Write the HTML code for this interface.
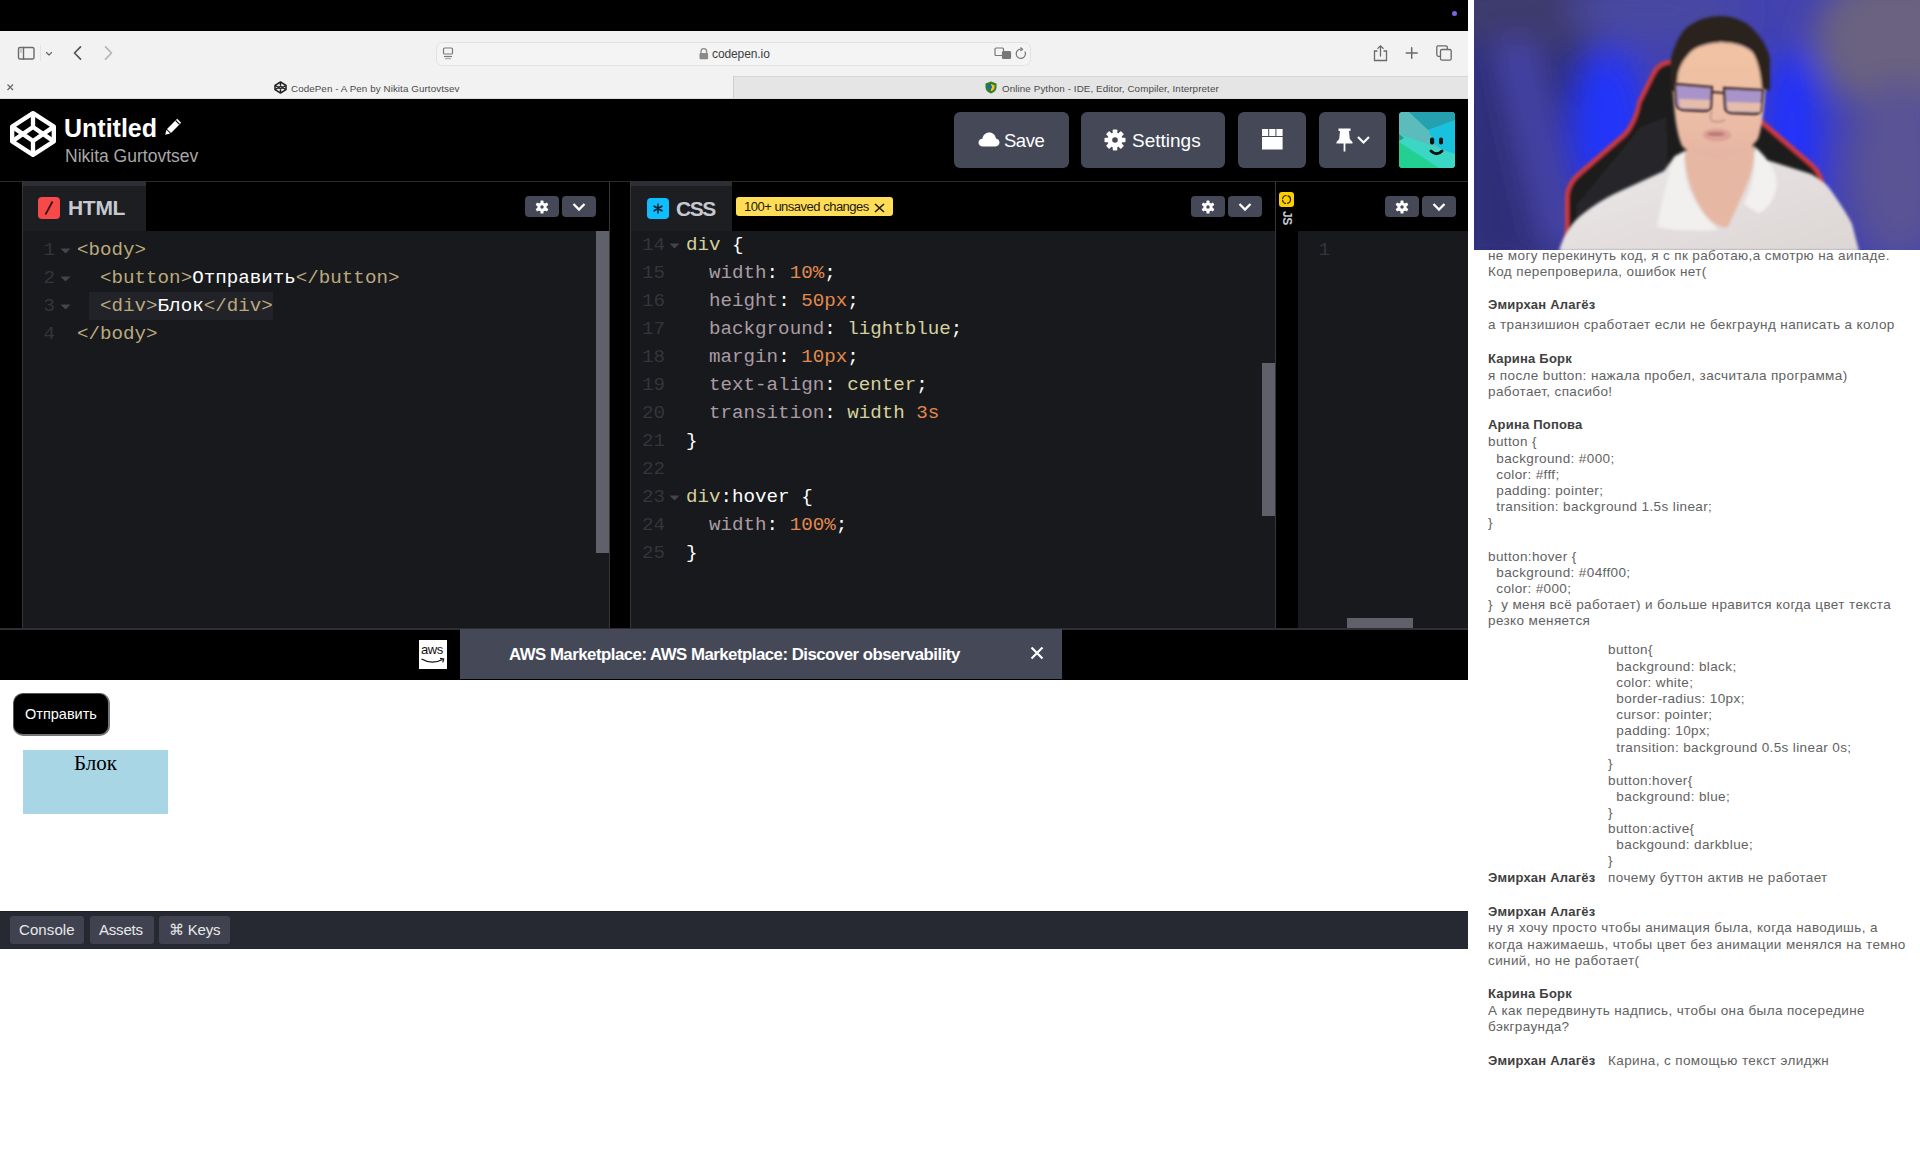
<!DOCTYPE html>
<html><head><meta charset="utf-8">
<style>
html,body{margin:0;padding:0}
body{width:1920px;height:1149px;overflow:hidden;position:relative;background:#fff;font-family:"Liberation Sans",sans-serif}
.a{position:absolute}
.mono{font-family:"Liberation Mono",monospace}
/* top */
#top{left:0;top:0;width:1468px;height:31px;background:#000}
#chrome{left:0;top:31px;width:1468px;height:68px;background:#f2f2f2}
#hdr{left:0;top:99px;width:1468px;height:82px;background:#000}
#edwrap{left:0;top:181px;width:1468px;height:449px;background:#000}
.ed{background:#17191d}
.tbtn{background:#444857;border-radius:4px}
#ad{left:0;top:630px;width:1468px;height:50px;background:#000}
#prev{left:0;top:680px;width:1468px;height:231px;background:#fff}
#cons{left:0;top:911px;width:1468px;height:38px;background:#262932}
#cam{left:1474px;top:0;width:446px;height:250px;background:#3b3f9a;overflow:hidden}
.cm{font-size:13.5px;line-height:16px;letter-spacing:0.38px;color:#626262;white-space:pre}
.cn{font-size:13px;line-height:16px;letter-spacing:0.2px;color:#404040;font-weight:bold;white-space:pre}
</style></head><body>
<div id="top" class="a"><div class="a" style="left:1452px;top:11px;width:5px;height:5px;border-radius:50%;background:#7a63e8"></div></div>
<div id="chrome" class="a">
<svg class="a" style="left:0;top:0" width="1468" height="68" viewBox="0 31 1468 68">
 <g fill="none" stroke="#6b6b6b" stroke-width="1.4" stroke-linecap="round" stroke-linejoin="round">
  <rect x="18.5" y="47.5" width="15.5" height="11.5" rx="1.6"/>
  <line x1="23.5" y1="47.5" x2="23.5" y2="59"/>
  <path d="M46.5 52.5 L49 55 L51.5 52.5" stroke-width="1.2"/>
  <path d="M80.5 46.8 L74.5 53 L80.5 59.2" stroke="#555" stroke-width="1.7"/>
  <path d="M105.5 46.8 L111.5 53 L105.5 59.2" stroke="#b5b5b5" stroke-width="1.7"/>
 </g>
 <rect x="20" y="49.5" width="2" height="0.8" fill="#888"/><rect x="20" y="51.5" width="2" height="0.8" fill="#888"/>
 <line x1="40.5" y1="45" x2="40.5" y2="61" stroke="#e4e4e4" stroke-width="1"/>
 <rect x="436.5" y="42.5" width="594" height="23" rx="6" fill="#f4f4f4" stroke="#e2e2e2" stroke-width="1"/>
 <g fill="none" stroke="#7a7a7a" stroke-width="1.2">
  <rect x="443.5" y="48" width="9" height="6" rx="1"/>
  <line x1="444" y1="56.5" x2="452" y2="56.5"/><line x1="445" y1="58.6" x2="451" y2="58.6" stroke="#aaa"/>
 </g>
 <path d="M701 53 v-1.5 a2.8 2.8 0 0 1 5.6 0 v1.5" fill="none" stroke="#8a8a8a" stroke-width="1.3"/>
 <rect x="699.5" y="53" width="8.6" height="6.2" rx="1" fill="#8a8a8a"/>
 <g fill="none" stroke="#777" stroke-width="1.2">
  <rect x="995" y="48" width="8.5" height="7.5" rx="1"/>
  <rect x="1002.5" y="51.5" width="8" height="7" rx="1" fill="#777"/>
  <path d="M1024.8 51.5 A4.6 4.6 0 1 1 1021 49.2"/>
  <path d="M1020.5 47.5 L1022.5 49.2 L1020.5 51"/>
 </g>
 <g fill="none" stroke="#6a6a6a" stroke-width="1.3" stroke-linecap="round">
  <path d="M1377 51 h-2.5 v9.5 h12 v-9.5 h-2.5"/>
  <path d="M1380.5 56 V45.8 M1377.8 48.4 L1380.5 45.8 L1383.2 48.4"/>
  <path d="M1411.7 47.7 V58.3 M1406.2 53 H1417.2" stroke-width="1.5"/>
  <rect x="1436.8" y="45.8" width="10.5" height="10.5" rx="1.5"/>
  <rect x="1440.5" y="49.5" width="10.7" height="10.7" rx="1.5" fill="#f2f2f2"/>
 </g>
 <rect x="733.5" y="76" width="734.5" height="23" fill="#e5e5e5"/>
 <line x1="733.5" y1="76.5" x2="1468" y2="76.5" stroke="#d6d6d6"/>
 <line x1="733.5" y1="76" x2="733.5" y2="99" stroke="#cfcfcf"/>
 <line x1="0" y1="98.5" x2="1468" y2="98.5" stroke="#dcdcdc"/>
 <g stroke="#666" stroke-width="1.2"><path d="M7.5 84.5 L13 90 M13 84.5 L7.5 90"/></g>
</svg>
<div class="a" style="left:712px;top:16px;font-size:12px;color:#3d3d3d;letter-spacing:-0.1px">codepen.io</div>
<svg class="a" style="left:274px;top:50px" width="13" height="13" viewBox="0 0 13 13"><g fill="none" stroke="#222" stroke-width="1.5" stroke-linejoin="round"><path d="M6.5 1 L12 4.3 V8.7 L6.5 12 L1 8.7 V4.3 Z"/><path d="M1 4.3 L6.5 7.7 L12 4.3 M6.5 1 V4.6 M1 8.7 L6.5 5.3 L12 8.7 M6.5 12 V8.4"/></g></svg>
<div class="a" style="left:291px;top:51.5px;font-size:9.8px;color:#4a4a4a;letter-spacing:0.08px">CodePen - A Pen by Nikita Gurtovtsev</div>
<svg class="a" style="left:985px;top:50px" width="12" height="13" viewBox="0 0 12 13"><path d="M6 0.5 L11.5 2.5 V6.5 C11.5 9.5 9 11.5 6 12.5 C3 11.5 0.5 9.5 0.5 6.5 V2.5 Z" fill="#2e7d32"/><path d="M6 3 L9.5 4.2 V6.5 C9.5 8.3 8 9.6 6 10.3 Z" fill="#f9c21a"/><circle cx="5" cy="6" r="2" fill="#1565c0"/></svg>
<div class="a" style="left:1002px;top:51.5px;font-size:9.8px;color:#4a4a4a;letter-spacing:0.1px">Online Python - IDE, Editor, Compiler, Interpreter</div>
</div>
<div id="hdr" class="a">
<svg class="a" style="left:10px;top:12px" width="46" height="46" viewBox="-3 -3 106 106"><g fill="none" stroke="#fff" stroke-width="10" stroke-linejoin="round"><path d="M50 2 L98 33 V67 L50 98 L2 67 V33 Z"/><path d="M2 33 L50 66 L98 33 M2 67 L50 34 L98 67 M50 2 V34 M50 98 V66"/></g></svg>
<div class="a" style="left:64px;top:14.5px;font-size:25px;font-weight:bold;color:#fff;letter-spacing:0px">Untitled</div>
<svg class="a" style="left:164px;top:18px" width="19" height="19" viewBox="0 0 19 19"><path d="M13.2 1.8 L17.2 5.8 L7 16 L3 12 Z" fill="#fff"/><path d="M2.4 12.8 L6.2 16.6 L1.2 17.8 Z" fill="#fff"/><path d="M11.6 3.4 L15.6 7.4" stroke="#000" stroke-width="1.2"/></svg>
<div class="a" style="left:65px;top:47px;font-size:17.5px;color:#a8a8a8">Nikita Gurtovtsev</div>
<div class="a tbtn" style="left:954px;top:13px;width:115px;height:56px;border-radius:6px"></div>
<svg class="a" style="left:978px;top:33px" width="22" height="15" viewBox="0 0 22 15"><path d="M5 14.5 C2 14.5 0.5 12.5 0.5 10.5 C0.5 8.3 2.3 6.7 4.4 6.7 C4.9 3 7.9 0.5 11.3 0.5 C14.8 0.5 17.5 3 17.9 6.5 C20 6.8 21.5 8.5 21.5 10.6 C21.5 12.8 19.8 14.5 17.5 14.5 Z" fill="#fff"/></svg>
<div class="a" style="left:1004px;top:31px;font-size:18.5px;letter-spacing:-0.5px;color:#fff">Save</div>
<div class="a tbtn" style="left:1081px;top:13px;width:144px;height:56px;border-radius:6px"></div>
<svg class="a" style="left:1104px;top:30px" width="22" height="22" viewBox="-11 -11 22 22"><g fill="#fff"><circle r="7.6"/><g id="tooth"><rect x="-2.3" y="-10.5" width="4.6" height="5" rx="0.8"/></g><use href="#tooth" transform="rotate(45)"/><use href="#tooth" transform="rotate(90)"/><use href="#tooth" transform="rotate(135)"/><use href="#tooth" transform="rotate(180)"/><use href="#tooth" transform="rotate(225)"/><use href="#tooth" transform="rotate(270)"/><use href="#tooth" transform="rotate(315)"/></g><circle r="2.8" fill="#444857"/></svg>
<div class="a" style="left:1132px;top:30.5px;font-size:19px;color:#fff">Settings</div>
<div class="a tbtn" style="left:1238px;top:13px;width:68px;height:56px;border-radius:6px"></div>
<svg class="a" style="left:1262px;top:30px" width="21" height="21" viewBox="0 0 21 21"><g fill="#fff"><rect x="0" y="0" width="6.2" height="7"/><rect x="7.2" y="0" width="6.2" height="7"/><rect x="14.4" y="0" width="6.2" height="7"/><rect x="0" y="8" width="20.6" height="12.5"/></g></svg>
<div class="a tbtn" style="left:1319px;top:13px;width:67px;height:56px;border-radius:6px"></div>
<svg class="a" style="left:1336px;top:29px" width="36" height="24" viewBox="0 0 36 24"><g fill="#fff"><path d="M2.5 0.5 H14.5 V3 H13 L13.8 11 L16.5 14 V15.5 H0.5 V14 L3.2 11 L4 3 H2.5 Z"/><rect x="7.6" y="15" width="1.8" height="8.5"/></g><path d="M22 9 L27.5 14.5 L33 9" fill="none" stroke="#fff" stroke-width="2.2"/></svg>
<div class="a" style="left:1399px;top:13px;width:56px;height:56px;border-radius:4px;overflow:hidden;background:#2cc0c8">
 <svg class="a" style="left:0;top:0" width="56" height="56" viewBox="0 0 56 56">
  <rect width="56" height="56" fill="#3ccdd0"/>
  <path d="M0 0 H56 V56 H0 Z" fill="#5cbcbc"/>
  <path d="M29 18 L56 8 V48 L36 32 Z" fill="#18c2de"/>
  <path d="M10 0 H56 V8 L29 18 Z" fill="#24a0b0"/>
  <path d="M0 22 L56 42 V56 H40 L0 34 Z" fill="#3cd6c4"/>
  <path d="M0 30 L40 56 H0 Z" fill="#22d092"/>
  <path d="M0 22 L5 26 L0 29 Z" fill="#2a9a88"/>
  <rect x="31" y="25.5" width="4.2" height="7" rx="2" fill="#081010"/>
  <rect x="40" y="25.5" width="4" height="7" rx="2" fill="#081010"/>
  <path d="M32 39 Q37.5 44.5 43 39" fill="none" stroke="#081010" stroke-width="3" stroke-linecap="round"/>
 </svg>
</div>
</div>
<div id="edwrap" class="a">
<div class="a" style="left:0;top:0;width:1468px;height:1px;background:#2b2b2e"></div>
<div class="a" style="left:22px;top:0;width:1px;height:447px;background:#35363a"></div>
<div class="a" style="left:23px;top:0;width:123px;height:50px;background:#1c1e22;border-top:5px solid #2d2f34;box-sizing:border-box"></div>
<div class="a" style="left:38px;top:16px;width:22px;height:22px;border-radius:4px;background:#f5494a"></div><svg class="a" style="left:38px;top:16px" width="22" height="22"><path d="M14.5 4.5 L7.5 17.5" stroke="#2a0e0e" stroke-width="1.6"/></svg>
<div class="a" style="left:68px;top:15px;font-size:21px;font-weight:bold;color:#c7c9d1;letter-spacing:-0.3px">HTML</div>
<div class="a tbtn" style="left:525px;top:15px;width:34px;height:21px;border-radius:4px"></div><svg class="a" style="left:535px;top:18.5px" width="14" height="14" viewBox="-7 -7 14 14"><g fill="#fff"><circle r="4.6"/><rect x="-1.5" y="-6.6" width="3" height="3.4" rx=".6"/><rect x="-1.5" y="-6.6" width="3" height="3.4" rx=".6" transform="rotate(60)"/><rect x="-1.5" y="-6.6" width="3" height="3.4" rx=".6" transform="rotate(120)"/><rect x="-1.5" y="-6.6" width="3" height="3.4" rx=".6" transform="rotate(180)"/><rect x="-1.5" y="-6.6" width="3" height="3.4" rx=".6" transform="rotate(240)"/><rect x="-1.5" y="-6.6" width="3" height="3.4" rx=".6" transform="rotate(300)"/></g><circle r="1.7" fill="#444857"/></svg>
<div class="a tbtn" style="left:562px;top:15px;width:34px;height:21px;border-radius:4px"></div><svg class="a" style="left:572px;top:21px" width="14" height="10" viewBox="0 0 14 10"><path d="M1.5 2 L7 7.5 L12.5 2" fill="none" stroke="#fff" stroke-width="2.3"/></svg>
<div class="a ed" style="left:23px;top:50px;width:586px;height:397px"></div>
<div class="a" style="left:596px;top:50px;width:13px;height:322px;background:#5f606a"></div>
<div class="a" style="left:609px;top:0;width:1px;height:447px;background:#35363a"></div>
<div class="a" style="left:630px;top:0;width:1px;height:447px;background:#35363a"></div>
<div class="a" style="left:631px;top:0;width:101px;height:50px;background:#1c1e22;border-top:5px solid #2d2f34;box-sizing:border-box"></div>
<div class="a" style="left:647px;top:17px;width:22px;height:21px;border-radius:4px;background:#0ebeff"></div><svg class="a" style="left:647px;top:17px" width="22" height="21" viewBox="0 0 22 21"><g stroke="#0b2533" stroke-width="1.6" stroke-linecap="round"><path d="M11 6 V15 M7.1 8.2 L14.9 12.8 M14.9 8.2 L7.1 12.8"/></g></svg>
<div class="a" style="left:676px;top:15.5px;font-size:21px;font-weight:bold;color:#c7c9d1;letter-spacing:-1.5px">CSS</div>
<div class="a" style="left:736px;top:16px;width:157px;height:19px;border-radius:3px;background:#ffdd57"></div><div class="a" style="left:744px;top:17.5px;font-size:13px;color:#1c1a10;letter-spacing:-0.5px">100+ unsaved changes</div><svg class="a" style="left:874px;top:21.5px" width="11" height="10"><path d="M1 1 L10 9 M10 1 L1 9" stroke="#1c1a10" stroke-width="1.6"/></svg>
<div class="a tbtn" style="left:1191px;top:15px;width:34px;height:21px;border-radius:4px"></div><svg class="a" style="left:1201px;top:18.5px" width="14" height="14" viewBox="-7 -7 14 14"><g fill="#fff"><circle r="4.6"/><rect x="-1.5" y="-6.6" width="3" height="3.4" rx=".6"/><rect x="-1.5" y="-6.6" width="3" height="3.4" rx=".6" transform="rotate(60)"/><rect x="-1.5" y="-6.6" width="3" height="3.4" rx=".6" transform="rotate(120)"/><rect x="-1.5" y="-6.6" width="3" height="3.4" rx=".6" transform="rotate(180)"/><rect x="-1.5" y="-6.6" width="3" height="3.4" rx=".6" transform="rotate(240)"/><rect x="-1.5" y="-6.6" width="3" height="3.4" rx=".6" transform="rotate(300)"/></g><circle r="1.7" fill="#444857"/></svg>
<div class="a tbtn" style="left:1228px;top:15px;width:34px;height:21px;border-radius:4px"></div><svg class="a" style="left:1238px;top:21px" width="14" height="10" viewBox="0 0 14 10"><path d="M1.5 2 L7 7.5 L12.5 2" fill="none" stroke="#fff" stroke-width="2.3"/></svg>
<div class="a ed" style="left:631px;top:50px;width:644px;height:397px"></div>
<div class="a" style="left:1262px;top:182px;width:13px;height:153px;background:#5f606a"></div>
<div class="a" style="left:1275px;top:0;width:1px;height:447px;background:#35363a"></div>
<div class="a" style="left:1279px;top:11px;width:15px;height:15px;border-radius:3px;background:#fcd000"></div><svg class="a" style="left:1279px;top:11px" width="15" height="15"><circle cx="7.5" cy="7.5" r="4" fill="none" stroke="#2a2200" stroke-width="1.2" stroke-dasharray="5.5 1"/></svg>
<div class="a" style="left:1280px;top:30px;font-size:12px;font-weight:bold;color:#c7c9d1;writing-mode:vertical-rl;letter-spacing:-0.5px">JS</div>
<div class="a tbtn" style="left:1385px;top:15px;width:34px;height:21px;border-radius:4px"></div><svg class="a" style="left:1395px;top:18.5px" width="14" height="14" viewBox="-7 -7 14 14"><g fill="#fff"><circle r="4.6"/><rect x="-1.5" y="-6.6" width="3" height="3.4" rx=".6"/><rect x="-1.5" y="-6.6" width="3" height="3.4" rx=".6" transform="rotate(60)"/><rect x="-1.5" y="-6.6" width="3" height="3.4" rx=".6" transform="rotate(120)"/><rect x="-1.5" y="-6.6" width="3" height="3.4" rx=".6" transform="rotate(180)"/><rect x="-1.5" y="-6.6" width="3" height="3.4" rx=".6" transform="rotate(240)"/><rect x="-1.5" y="-6.6" width="3" height="3.4" rx=".6" transform="rotate(300)"/></g><circle r="1.7" fill="#444857"/></svg>
<div class="a tbtn" style="left:1422px;top:15px;width:34px;height:21px;border-radius:4px"></div><svg class="a" style="left:1432px;top:21px" width="14" height="10" viewBox="0 0 14 10"><path d="M1.5 2 L7 7.5 L12.5 2" fill="none" stroke="#fff" stroke-width="2.3"/></svg>
<div class="a ed" style="left:1298px;top:50px;width:170px;height:397px"></div>
<div class="a" style="left:1347px;top:437px;width:66px;height:10px;background:#5f606a"></div>
<div class="a" style="left:0;top:447px;width:1468px;height:2px;background:#2e2f33"></div>
<div class="a" style="left:89px;top:111px;width:184px;height:28px;background:#212328"></div>
<div class="a mono" style="left:20px;top:55px;width:35px;text-align:right;font-size:19.2px;line-height:28px;white-space:pre;color:#33353b">1</div>
<svg class="a" style="left:60px;top:67px" width="11" height="6"><path d="M0.5 0.5 H10.5 L5.5 5.5 Z" fill="#43454b"/></svg>
<div class="a mono" style="left:77px;top:55px;font-size:19.2px;line-height:28px;white-space:pre;color:#fff"><span style="color:#bba97c">&lt;body&gt;</span></div>
<div class="a mono" style="left:20px;top:83px;width:35px;text-align:right;font-size:19.2px;line-height:28px;white-space:pre;color:#33353b">2</div>
<svg class="a" style="left:60px;top:95px" width="11" height="6"><path d="M0.5 0.5 H10.5 L5.5 5.5 Z" fill="#43454b"/></svg>
<div class="a mono" style="left:77px;top:83px;font-size:19.2px;line-height:28px;white-space:pre;color:#fff">  <span style="color:#bba97c">&lt;button&gt;</span><span style="color:#ffffff">Отправить</span><span style="color:#bba97c">&lt;/button&gt;</span></div>
<div class="a mono" style="left:20px;top:111px;width:35px;text-align:right;font-size:19.2px;line-height:28px;white-space:pre;color:#33353b">3</div>
<svg class="a" style="left:60px;top:123px" width="11" height="6"><path d="M0.5 0.5 H10.5 L5.5 5.5 Z" fill="#43454b"/></svg>
<div class="a mono" style="left:77px;top:111px;font-size:19.2px;line-height:28px;white-space:pre;color:#fff">  <span style="color:#bba97c">&lt;div&gt;</span><span style="color:#ffffff">Блок</span><span style="color:#bba97c">&lt;/div&gt;</span></div>
<div class="a mono" style="left:20px;top:139px;width:35px;text-align:right;font-size:19.2px;line-height:28px;white-space:pre;color:#33353b">4</div>
<div class="a mono" style="left:77px;top:139px;font-size:19.2px;line-height:28px;white-space:pre;color:#fff"><span style="color:#bba97c">&lt;/body&gt;</span></div>
<div class="a mono" style="left:630px;top:50px;width:35px;text-align:right;font-size:19.2px;line-height:28px;white-space:pre;color:#33353b">14</div>
<svg class="a" style="left:669px;top:62px" width="11" height="6"><path d="M0.5 0.5 H10.5 L5.5 5.5 Z" fill="#43454b"/></svg>
<div class="a mono" style="left:686px;top:50px;font-size:19.2px;line-height:28px;white-space:pre;color:#fff"><span style="color:#d6d19c">div</span><span style="color:#ffffff"> {</span></div>
<div class="a mono" style="left:630px;top:78px;width:35px;text-align:right;font-size:19.2px;line-height:28px;white-space:pre;color:#33353b">15</div>
<div class="a mono" style="left:686px;top:78px;font-size:19.2px;line-height:28px;white-space:pre;color:#fff">  <span style="color:#aa9ca3">width</span><span style="color:#ffffff">: </span><span style="color:#e38a4e">10%</span><span style="color:#ffffff">;</span></div>
<div class="a mono" style="left:630px;top:106px;width:35px;text-align:right;font-size:19.2px;line-height:28px;white-space:pre;color:#33353b">16</div>
<div class="a mono" style="left:686px;top:106px;font-size:19.2px;line-height:28px;white-space:pre;color:#fff">  <span style="color:#aa9ca3">height</span><span style="color:#ffffff">: </span><span style="color:#e38a4e">50px</span><span style="color:#ffffff">;</span></div>
<div class="a mono" style="left:630px;top:134px;width:35px;text-align:right;font-size:19.2px;line-height:28px;white-space:pre;color:#33353b">17</div>
<div class="a mono" style="left:686px;top:134px;font-size:19.2px;line-height:28px;white-space:pre;color:#fff">  <span style="color:#aa9ca3">background</span><span style="color:#ffffff">: </span><span style="color:#d6d19c">lightblue</span><span style="color:#ffffff">;</span></div>
<div class="a mono" style="left:630px;top:162px;width:35px;text-align:right;font-size:19.2px;line-height:28px;white-space:pre;color:#33353b">18</div>
<div class="a mono" style="left:686px;top:162px;font-size:19.2px;line-height:28px;white-space:pre;color:#fff">  <span style="color:#aa9ca3">margin</span><span style="color:#ffffff">: </span><span style="color:#e38a4e">10px</span><span style="color:#ffffff">;</span></div>
<div class="a mono" style="left:630px;top:190px;width:35px;text-align:right;font-size:19.2px;line-height:28px;white-space:pre;color:#33353b">19</div>
<div class="a mono" style="left:686px;top:190px;font-size:19.2px;line-height:28px;white-space:pre;color:#fff">  <span style="color:#aa9ca3">text-align</span><span style="color:#ffffff">: </span><span style="color:#d6d19c">center</span><span style="color:#ffffff">;</span></div>
<div class="a mono" style="left:630px;top:218px;width:35px;text-align:right;font-size:19.2px;line-height:28px;white-space:pre;color:#33353b">20</div>
<div class="a mono" style="left:686px;top:218px;font-size:19.2px;line-height:28px;white-space:pre;color:#fff">  <span style="color:#aa9ca3">transition</span><span style="color:#ffffff">: </span><span style="color:#d6d19c">width </span><span style="color:#e38a4e">3s</span></div>
<div class="a mono" style="left:630px;top:246px;width:35px;text-align:right;font-size:19.2px;line-height:28px;white-space:pre;color:#33353b">21</div>
<div class="a mono" style="left:686px;top:246px;font-size:19.2px;line-height:28px;white-space:pre;color:#fff"><span style="color:#ffffff">}</span></div>
<div class="a mono" style="left:630px;top:274px;width:35px;text-align:right;font-size:19.2px;line-height:28px;white-space:pre;color:#33353b">22</div>
<div class="a mono" style="left:686px;top:274px;font-size:19.2px;line-height:28px;white-space:pre;color:#fff"></div>
<div class="a mono" style="left:630px;top:302px;width:35px;text-align:right;font-size:19.2px;line-height:28px;white-space:pre;color:#33353b">23</div>
<svg class="a" style="left:669px;top:314px" width="11" height="6"><path d="M0.5 0.5 H10.5 L5.5 5.5 Z" fill="#43454b"/></svg>
<div class="a mono" style="left:686px;top:302px;font-size:19.2px;line-height:28px;white-space:pre;color:#fff"><span style="color:#d6d19c">div</span><span style="color:#ffffff">:hover {</span></div>
<div class="a mono" style="left:630px;top:330px;width:35px;text-align:right;font-size:19.2px;line-height:28px;white-space:pre;color:#33353b">24</div>
<div class="a mono" style="left:686px;top:330px;font-size:19.2px;line-height:28px;white-space:pre;color:#fff">  <span style="color:#aa9ca3">width</span><span style="color:#ffffff">: </span><span style="color:#e38a4e">100%</span><span style="color:#ffffff">;</span></div>
<div class="a mono" style="left:630px;top:358px;width:35px;text-align:right;font-size:19.2px;line-height:28px;white-space:pre;color:#33353b">25</div>
<div class="a mono" style="left:686px;top:358px;font-size:19.2px;line-height:28px;white-space:pre;color:#fff"><span style="color:#ffffff">}</span></div>
<div class="a mono" style="left:1295px;top:55px;width:35px;text-align:right;font-size:19.2px;line-height:28px;white-space:pre;color:#33353b">1</div>
</div>
<div id="ad" class="a">
<div class="a" style="left:419px;top:10px;width:28px;height:29px;background:#fff"></div>
<div class="a" style="left:421px;top:13px;font-size:13px;color:#111;letter-spacing:-0.4px;line-height:13px">aws</div>
<svg class="a" style="left:420px;top:26px" width="26" height="10" viewBox="0 0 26 10"><path d="M1.5 3 Q12 9 22.5 3.5" fill="none" stroke="#111" stroke-width="1.4"/><path d="M20 2.3 L23.6 3 L22.8 6.4" fill="none" stroke="#111" stroke-width="1.2"/></svg>
<div class="a" style="left:460px;top:-1px;width:602px;height:50px;background:#444857"></div>
<div class="a" style="left:509px;top:15px;font-size:16.8px;font-weight:bold;color:#fff;letter-spacing:-0.5px">AWS Marketplace: AWS Marketplace: Discover observability</div>
<svg class="a" style="left:1030px;top:16px" width="14" height="14"><path d="M1.5 1.5 L12.5 12.5 M12.5 1.5 L1.5 12.5" stroke="#fff" stroke-width="2.2"/></svg>
</div>
<div id="prev" class="a">
<div class="a" style="left:13px;top:13px;width:97px;height:43px;box-sizing:border-box;background:#000;border-radius:10px;border-right:2px solid #767676;border-bottom:2px solid #767676;border-top:0.5px solid #555;border-left:0.5px solid #555"></div>
<div class="a" style="left:25px;top:25.5px;font-size:14.5px;color:#fff;letter-spacing:0px">Отправить</div>
<div class="a" style="left:23px;top:70px;width:145px;height:64px;background:#a9d6e4"></div>
<div class="a" style="left:23px;top:70.5px;width:145px;text-align:center;font-family:'Liberation Serif',serif;font-size:21px;color:#000">Блок</div>
</div>
<div id="cons" class="a">
<div class="a" style="left:0;top:0;width:1468px;height:1px;background:#1e2027"></div>
<div class="a" style="left:10px;top:5px;width:74px;height:28px;background:#40434f;border-radius:3px"></div>
<div class="a" style="left:90px;top:5px;width:64px;height:28px;background:#40434f;border-radius:3px"></div>
<div class="a" style="left:159px;top:5px;width:71px;height:28px;background:#40434f;border-radius:3px"></div>
<div class="a" style="left:19px;top:10px;font-size:15px;color:#e8e9ec;letter-spacing:0.1px">Console</div>
<div class="a" style="left:99px;top:10px;font-size:15px;color:#e8e9ec;letter-spacing:-0.2px">Assets</div>
<div class="a" style="left:169px;top:10px;font-size:15px;color:#e8e9ec;letter-spacing:-0.2px">⌘ Keys</div>
</div>
<div id="chat">
<div class="a cm" style="left:1488.0px;top:247.9px">не могу перекинуть код, я с пк работаю,а смотрю на аипаде.</div>
<div class="a cm" style="left:1488.0px;top:264.0px">Код перепроверила, ошибок нет(</div>
<div class="a cn" style="left:1488px;top:296.7px">Эмирхан Алагёз</div>
<div class="a cm" style="left:1488.0px;top:317.3px">а транзишион сработает если не бекграунд написать а колор</div>
<div class="a cn" style="left:1488px;top:351.1px">Карина Борк</div>
<div class="a cm" style="left:1488.0px;top:368.1px">я после button: нажала пробел, засчитала программа)</div>
<div class="a cm" style="left:1488.0px;top:384.1px">работает, спасибо!</div>
<div class="a cn" style="left:1488px;top:417.1px">Арина Попова</div>
<div class="a cm" style="left:1488.0px;top:433.9px">button {</div>
<div class="a cm" style="left:1488.0px;top:450.6px">  background: #000;</div>
<div class="a cm" style="left:1488.0px;top:466.6px">  color: #fff;</div>
<div class="a cm" style="left:1488.0px;top:483.4px">  padding: pointer;</div>
<div class="a cm" style="left:1488.0px;top:499.4px">  transition: background 1.5s linear;</div>
<div class="a cm" style="left:1488.0px;top:515.4px">}</div>
<div class="a cm" style="left:1488.0px;top:548.6px">button:hover {</div>
<div class="a cm" style="left:1488.0px;top:564.7px">  background: #04ff00;</div>
<div class="a cm" style="left:1488.0px;top:580.7px">  color: #000;</div>
<div class="a cm" style="left:1488.0px;top:597.2px">}  у меня всё работает) и больше нравится когда цвет текста</div>
<div class="a cm" style="left:1488.0px;top:613.2px">резко меняется</div>
<div class="a cm" style="left:1608.1px;top:642.1px">button{</div>
<div class="a cm" style="left:1608.1px;top:658.6px">  background: black;</div>
<div class="a cm" style="left:1608.1px;top:674.7px">  color: white;</div>
<div class="a cm" style="left:1608.1px;top:691.2px">  border-radius: 10px;</div>
<div class="a cm" style="left:1608.1px;top:707.2px">  cursor: pointer;</div>
<div class="a cm" style="left:1608.1px;top:723.2px">  padding: 10px;</div>
<div class="a cm" style="left:1608.1px;top:740.0px">  transition: background 0.5s linear 0s;</div>
<div class="a cm" style="left:1608.1px;top:756.0px">}</div>
<div class="a cm" style="left:1608.1px;top:772.7px">button:hover{</div>
<div class="a cm" style="left:1608.1px;top:788.8px">  background: blue;</div>
<div class="a cm" style="left:1608.1px;top:804.8px">}</div>
<div class="a cm" style="left:1608.1px;top:821.3px">button:active{</div>
<div class="a cm" style="left:1608.1px;top:837.4px">  backgound: darkblue;</div>
<div class="a cm" style="left:1608.1px;top:853.4px">}</div>
<div class="a cn" style="left:1488px;top:870.3px">Эмирхан Алагёз</div>
<div class="a cm" style="left:1608.1px;top:870.1px">почему буттон актив не работает</div>
<div class="a cn" style="left:1488px;top:903.7px">Эмирхан Алагёз</div>
<div class="a cm" style="left:1488.0px;top:920.2px">ну я хочу просто чтобы анимация была, когда наводишь, а</div>
<div class="a cm" style="left:1488.0px;top:936.7px">когда нажимаешь, чтобы цвет без анимации менялся на темно</div>
<div class="a cm" style="left:1488.0px;top:953.2px">синий, но не работает(</div>
<div class="a cn" style="left:1488px;top:986.2px">Карина Борк</div>
<div class="a cm" style="left:1488.0px;top:1003.2px">А как передвинуть надпись, чтобы она была посередине</div>
<div class="a cm" style="left:1488.0px;top:1019.2px">бэкграунда?</div>
<div class="a cn" style="left:1488px;top:1052.7px">Эмирхан Алагёз</div>
<div class="a cm" style="left:1608.1px;top:1052.5px">Карина, с помощью текст элиджн</div>
</div>
<div id="cam" class="a">
<svg width="446" height="250" viewBox="0 0 446 250">
<defs>
 <filter id="b1" x="-30%" y="-30%" width="160%" height="160%"><feGaussianBlur stdDeviation="16"/></filter>
 <filter id="b2" x="-10%" y="-10%" width="120%" height="120%"><feGaussianBlur stdDeviation="1.5"/></filter>
 <filter id="b3" x="-10%" y="-10%" width="120%" height="120%"><feGaussianBlur stdDeviation="0.9"/></filter>
 <linearGradient id="fg" x1="0" y1="0" x2="0" y2="1"><stop offset="0" stop-color="#f2c2a2"/><stop offset="0.6" stop-color="#ecbea6"/><stop offset="1" stop-color="#e6b4a2"/></linearGradient>
 <linearGradient id="sg" x1="0" y1="0" x2="1" y2="1"><stop offset="0" stop-color="#ece9ea"/><stop offset="1" stop-color="#dcd6d4"/></linearGradient>
</defs>
<rect width="446" height="250" fill="#4342b0"/>
<g filter="url(#b1)">
 <rect x="-20" y="-20" width="130" height="290" fill="#2e2f78"/>
 <ellipse cx="60" cy="10" rx="100" ry="40" fill="#3c3b6c"/>
 <path d="M20 40 L60 40 L110 250 L70 250 Z" fill="#4644a8"/>
 <ellipse cx="420" cy="40" rx="80" ry="70" fill="#6a6280"/>
 <ellipse cx="425" cy="170" rx="50" ry="90" fill="#5a5294"/>
 <ellipse cx="180" cy="10" rx="90" ry="25" fill="#4a4aa0"/>
 <ellipse cx="135" cy="130" rx="38" ry="80" fill="#2434fa"/>
 <ellipse cx="318" cy="140" rx="30" ry="90" fill="#2232fc"/>
</g>
<g filter="url(#b2)">
 <path d="M91 250 L91 196 Q92 182 104 172 L150 132 Q160 120 164 100 L178 72 Q184 60 198 60 L230 64 L282 118 L290 121 L340 164 Q350 174 350 186 L352 250 Z" fill="#d03a42"/>
 <path d="M95 250 L95 197 Q96 184 107 175 L153 135 Q163 123 167 103 L181 75 Q186 64 198 64 L228 68 L280 122 L288 125 L337 167 Q346 176 346 188 L348 250 Z" fill="#1b1b1e"/>
 <path d="M104 250 L103 205 L150 148 L166 128 L192 118 L196 250 Z" fill="#28282c"/>
</g>
<g filter="url(#b2)">
 <path d="M85 251 Q92 226 110 213 Q124 202 140 194 L190 171 L201 156 L211 151 L277 146 L286 158 L337 174 Q352 182 358 192 Q372 212 378 224 L385 251 Z" fill="url(#sg)"/>
 <path d="M210 152 Q212 190 232 216 Q246 230 254 227 Q262 210 270 192 Q282 168 280 146 Z" fill="#e6b8a4"/>
 <path d="M200 157 Q190 190 183 227 Q210 232 244 230 Q226 214 214 188 Q208 170 211 151 Z" fill="#f2f0ef"/>
 <path d="M280 146 Q292 156 298 168 Q306 180 300 196 Q292 212 284 213 L270 204 Q282 180 281 152 Z" fill="#f3f1f0"/>
 <path d="M199 84 Q198 46 248 42 Q292 44 291 86 Q290 120 284 139 Q270 158 244 159 Q218 157 208 146 Q200 128 199 84 Z" fill="url(#fg)"/>
 <path d="M196 92 L197 58 Q203 36 213 27 Q230 15 248 16 Q266 17 277 27 Q292 41 296 58 L296 90 L288 90 Q286 64 279 53 Q272 43 246 42 Q222 44 214 55 Q206 64 204 74 L202 92 Z" fill="#2c201c"/>
</g>
<g filter="url(#b3)">
 <path d="M201 84 L238 87 L237 108 Q235 111 229 111 L209 110 Q203 109 202 104 Z" fill="#a894c8" stroke="#4a302c" stroke-width="2.3"/>
 <path d="M250 88 L289 90 L287 111 Q285 114 279 114 L257 113 Q251 112 251 107 Z" fill="#a894c8" stroke="#4a302c" stroke-width="2.3"/>
 <path d="M238 92 L250 93" stroke="#3a2826" stroke-width="2"/>
 <path d="M205 99 L236 100 L235 109 L206 108 Z" fill="#e6bcaa"/>
 <path d="M253 102 L287 103 L286 112 L254 111 Z" fill="#e6bcaa"/>
 <path d="M238 111 Q235 118 238 121 Q245 123 251 120" fill="none" stroke="#c99e92" stroke-width="2"/>
 <ellipse cx="243" cy="135" rx="14" ry="6.5" fill="#dca096"/>
 <ellipse cx="242" cy="134" rx="9" ry="2" fill="#b87a72"/>
</g>
</svg>
</div>
</body></html>
